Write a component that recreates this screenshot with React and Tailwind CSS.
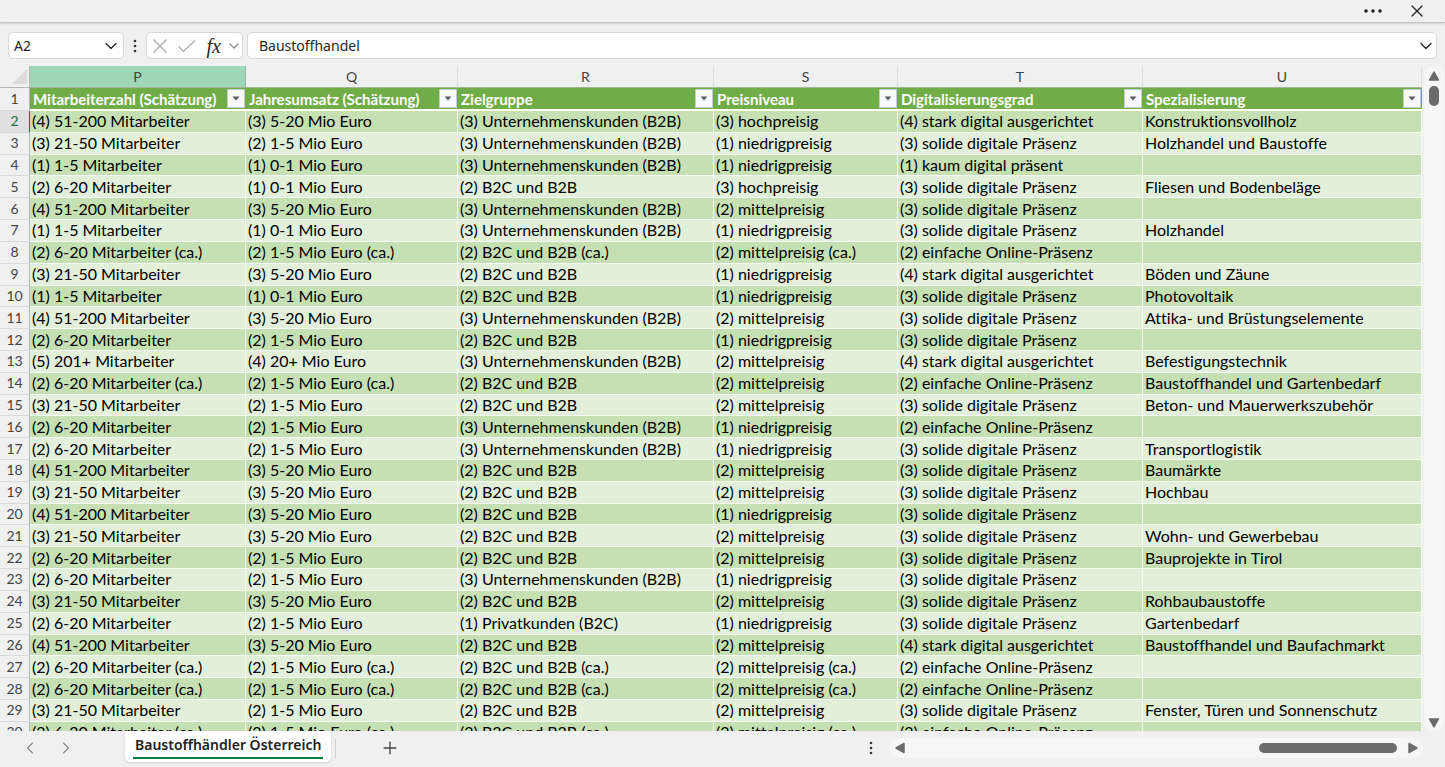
import React, { useState } from 'react';
import { ChevronDown, ChevronLeft, ChevronRight, Plus, X } from 'lucide-react';

const columns = [
  { letter: 'P', title: 'Mitarbeiterzahl (Schätzung)', width: 'w-[216px]' },
  { letter: 'Q', title: 'Jahresumsatz (Schätzung)', width: 'w-[212px]' },
  { letter: 'R', title: 'Zielgruppe', width: 'w-[256px]' },
  { letter: 'S', title: 'Preisniveau', width: 'w-[184px]' },
  { letter: 'T', title: 'Digitalisierungsgrad', width: 'w-[245px]' },
  { letter: 'U', title: 'Spezialisierung', width: '' },
];

const M1 = '(1) 1-5 Mitarbeiter';
const M2 = '(2) 6-20 Mitarbeiter';
const M3 = '(3) 21-50 Mitarbeiter';
const M4 = '(4) 51-200 Mitarbeiter';
const M5 = '(5) 201+ Mitarbeiter';

const E1 = '(1) 0-1 Mio Euro';
const E2 = '(2) 1-5 Mio Euro';
const E3 = '(3) 5-20 Mio Euro';
const E4 = '(4) 20+ Mio Euro';

const B2C = '(1) Privatkunden (B2C)';
const BOTH = '(2) B2C und B2B';
const B2B = '(3) Unternehmenskunden (B2B)';

const LOW = '(1) niedrigpreisig';
const MID = '(2) mittelpreisig';
const HIGH = '(3) hochpreisig';

const D1 = '(1) kaum digital präsent';
const D2 = '(2) einfache Online-Präsenz';
const D3 = '(3) solide digitale Präsenz';
const D4 = '(4) stark digital ausgerichtet';

const ca = (text) => `${text} (ca.)`;

const rows = [
  [M4, E3, B2B, HIGH, D4, 'Konstruktionsvollholz'],
  [M3, E2, B2B, LOW, D3, 'Holzhandel und Baustoffe'],
  [M1, E1, B2B, LOW, D1, ''],
  [M2, E1, BOTH, HIGH, D3, 'Fliesen und Bodenbeläge'],
  [M4, E3, B2B, MID, D3, ''],
  [M1, E1, B2B, LOW, D3, 'Holzhandel'],
  [ca(M2), ca(E2), ca(BOTH), ca(MID), D2, ''],
  [M3, E3, BOTH, LOW, D4, 'Böden und Zäune'],
  [M1, E1, BOTH, LOW, D3, 'Photovoltaik'],
  [M4, E3, B2B, MID, D3, 'Attika- und Brüstungselemente'],
  [M2, E2, BOTH, LOW, D3, ''],
  [M5, E4, B2B, MID, D4, 'Befestigungstechnik'],
  [ca(M2), ca(E2), BOTH, MID, D2, 'Baustoffhandel und Gartenbedarf'],
  [M3, E2, BOTH, MID, D3, 'Beton- und Mauerwerkszubehör'],
  [M2, E2, B2B, LOW, D2, ''],
  [M2, E2, B2B, LOW, D3, 'Transportlogistik'],
  [M4, E3, BOTH, MID, D3, 'Baumärkte'],
  [M3, E3, BOTH, MID, D3, 'Hochbau'],
  [M4, E3, BOTH, LOW, D3, ''],
  [M3, E3, BOTH, MID, D3, 'Wohn- und Gewerbebau'],
  [M2, E2, BOTH, MID, D3, 'Bauprojekte in Tirol'],
  [M2, E2, B2B, LOW, D3, ''],
  [M3, E3, BOTH, MID, D3, 'Rohbaubaustoffe'],
  [M2, E2, B2C, LOW, D3, 'Gartenbedarf'],
  [M4, E3, BOTH, MID, D4, 'Baustoffhandel und Baufachmarkt'],
  [ca(M2), ca(E2), ca(BOTH), ca(MID), D2, ''],
  [ca(M2), ca(E2), ca(BOTH), ca(MID), D2, ''],
  [M3, E2, BOTH, MID, D3, 'Fenster, Türen und Sonnenschutz'],
  [ca(M2), ca(E2), ca(BOTH), ca(MID), D2, ''],
];

const Arrow = ({ points, className }) => (
  <svg viewBox="0 0 12 12" className={className} aria-hidden="true">
    <polygon points={points} fill="#6b6b6b" stroke="#6b6b6b" strokeWidth="1.5" strokeLinejoin="round" />
  </svg>
);

const Dots = ({ className }) => (
  <svg viewBox="0 0 4 14" className={className} fill="#333333" aria-hidden="true">
    <circle cx="2" cy="2" r="1.3" />
    <circle cx="2" cy="7" r="1.3" />
    <circle cx="2" cy="12" r="1.3" />
  </svg>
);

const TitleBar = () => (
  <header className="relative z-10 flex h-[23px] shrink-0 items-center justify-end gap-6 border-b border-[#c6c6c6] bg-[#f0f0f0] pr-[18px] shadow-sm">
    <button aria-label="Weitere Optionen" className="flex h-5 items-center">
      <svg viewBox="0 0 20 4" className="h-1 w-5" fill="#222222">
        <circle cx="3" cy="2" r="1.8" />
        <circle cx="10" cy="2" r="1.8" />
        <circle cx="17" cy="2" r="1.8" />
      </svg>
    </button>
    <button aria-label="Schließen" className="flex h-5 items-center">
      <X className="h-5 w-5 text-[#222222]" strokeWidth={1.5} />
    </button>
  </header>
);

const FormulaBar = () => {
  const [cell, setCell] = useState('A2');
  const [formula, setFormula] = useState('Baustoffhandel');

  return (
    <div className="flex shrink-0 items-center px-2 pt-[9px] pb-[7px] font-['Noto_Sans',sans-serif] text-sm text-[#262626]">
      <div className="flex h-[27px] w-[116px] items-center rounded-[5px] border border-[#d8d8d8] bg-white pr-0.5 pl-[5px]">
        <input
          aria-label="Namenfeld"
          className="min-w-0 flex-1 bg-transparent outline-none"
          value={cell}
          onChange={(e) => setCell(e.target.value)}
        />
        <button aria-label="Namenfeld öffnen">
          <ChevronDown className="h-5 w-5" strokeWidth={1.6} />
        </button>
      </div>
      <Dots className="mx-2 h-3.5 w-1.5" />
      <div className="flex h-[27px] w-[97px] items-center justify-between rounded-[5px] border border-[#d8d8d8] bg-white pl-[5px]">
        <button aria-label="Abbrechen">
          <svg viewBox="0 0 16 16" className="h-4 w-4" fill="none" stroke="#a8a8a8" strokeWidth="1.2">
            <path d="M1.5 1.5 14.5 14.5M14.5 1.5 1.5 14.5" />
          </svg>
        </button>
        <button aria-label="Eingeben" className="ml-1">
          <svg viewBox="0 0 20 14" className="h-3.5 w-5" fill="none" stroke="#a8a8a8" strokeWidth="1.2">
            <path d="M1.5 7.5 6.5 12.5 18 1.5" />
          </svg>
        </button>
        <button aria-label="Funktion einfügen" className="ml-1 font-['Liberation_Serif',serif] text-xl leading-5 italic">
          fx
        </button>
        <button aria-label="Funktionsliste">
          <ChevronDown className="h-4 w-4 text-[#8a8a8a]" strokeWidth={1.8} />
        </button>
      </div>
      <div className="ml-1 flex h-[27px] flex-1 items-center rounded-[5px] border border-[#d8d8d8] bg-white pl-[11px]">
        <input
          aria-label="Bearbeitungsleiste"
          className="min-w-0 flex-1 bg-transparent outline-none"
          value={formula}
          onChange={(e) => setFormula(e.target.value)}
        />
        <button aria-label="Bearbeitungsleiste erweitern">
          <ChevronDown className="h-5 w-5" strokeWidth={1.6} />
        </button>
      </div>
    </div>
  );
};

const Sheet = () => (
  <table className="h-[678px] w-full table-fixed border-separate border-spacing-0 text-base leading-5 whitespace-nowrap text-black [font-variant-ligatures:none]">
    <colgroup>
      <col className="w-[30px]" />
      {columns.map((col) => (
        <col key={col.letter} className={col.width} />
      ))}
    </colgroup>
    <thead>
      <tr className="h-[22px] text-sm">
        <td className="border-r border-b border-[#b5b5b5] p-0">
          <svg viewBox="0 0 16 16" className="ml-auto h-4 w-[18px]" aria-hidden="true">
            <polygon points="15,0 15,15 0,15" fill="#dcdcdc" />
          </svg>
        </td>
        {columns.map((col) => (
          <th
            key={col.letter}
            scope="col"
            className={`border-r border-b border-b-[#a3b59a] p-0 font-normal text-[#444444] ${
              col.letter === 'P' ? 'border-r-[#9ab8a8] bg-[#9fd6b8]' : 'border-r-[#dedede]'
            }`}
          >
            {col.letter}
          </th>
        ))}
      </tr>
      <tr className="h-[23px] bg-[#70ad47] text-[15px] text-white">
        <th scope="row" className="border-r border-b border-r-[#b5b5b5] border-b-[#dadada] bg-[#f0f0f0] p-0 text-sm font-normal text-[#444444]">
          1
        </th>
        {columns.map((col) => (
          <th key={col.letter} scope="col" className="border-b-2 border-white p-0 pl-[3px] text-left">
            <div className="flex items-center justify-between">
              <span>{col.title}</span>
              <button
                aria-label={`${col.title} filtern`}
                className="mr-px flex h-[19px] w-[18px] items-center justify-center border border-[#c5cbd6] bg-[#f8f9fc]"
              >
                <svg viewBox="0 0 8 5" className="h-[5px] w-2" aria-hidden="true">
                  <polygon points="0.5,0.5 7.5,0.5 4,4.5" fill="#5c5c5c" />
                </svg>
              </button>
            </div>
          </th>
        ))}
      </tr>
    </thead>
    <tbody>
      {rows.map((row, i) => (
        <tr key={i} className="odd:bg-[#c6e0b4] even:bg-[#e2efda]">
          <th
            scope="row"
            className={`border-r border-b border-b-[#dadada] p-0 text-sm font-normal ${
              i === 0 ? 'border-r-[#217346] bg-[#e0e0e0] text-[#1e7145]' : 'border-r-[#b5b5b5] bg-[#f0f0f0] text-[#444444]'
            }`}
          >
            {i + 2}
          </th>
          {row.map((text, j) => (
            <td key={j} className="border-r border-b border-[#f5faf2] p-0 pl-0.5">
              {text}
            </td>
          ))}
        </tr>
      ))}
    </tbody>
  </table>
);

const VerticalScroll = () => (
  <div className="mr-px ml-0.5 flex w-5 shrink-0 flex-col items-center rounded-full bg-[#f6f6f6] pt-1 pb-0.5">
    <button aria-label="Nach oben" className="flex">
      <Arrow points="6,2 10.5,10 1.5,10" className="h-3 w-3" />
    </button>
    <div className="mt-1 h-5 w-2.5 rounded-full bg-[#6b6b6b]" />
    <button aria-label="Nach unten" className="mt-auto flex">
      <Arrow points="6,10 10.5,2 1.5,2" className="h-3 w-3" />
    </button>
  </div>
);

const BottomBar = () => (
  <footer className="flex h-9 shrink-0 items-start">
    <div className="flex h-[34px] w-[125px] items-center gap-4 pl-5 text-[#8c8c8c]">
      <button aria-label="Vorheriges Blatt">
        <ChevronLeft className="h-5 w-5" strokeWidth={1.5} />
      </button>
      <button aria-label="Nächstes Blatt">
        <ChevronRight className="h-5 w-5" strokeWidth={1.5} />
      </button>
    </div>
    <button className="h-[31px] rounded-b-[5px] bg-white px-2 shadow-sm">
      <span className="block border-b-2 border-[#107c41] px-0.5 pb-0.5 font-['Noto_Sans',sans-serif] text-sm leading-5 font-semibold text-[#222222]">
        Baustoffhändler Österreich
      </span>
    </button>
    <div className="mt-2 ml-1 h-5 w-px bg-[#d0d0d0]" />
    <button aria-label="Neues Blatt" className="mt-[7px] ml-11">
      <Plus className="h-5 w-5 text-[#444444]" strokeWidth={1.6} />
    </button>
    <div className="mt-[7px] mr-[22px] ml-auto flex w-[555px] items-center gap-4">
      <Dots className="h-3.5 w-1.5" />
      <div className="flex h-5 flex-1 items-center rounded-full bg-[#f6f6f6] px-1">
        <button aria-label="Nach links">
          <Arrow points="2,6 10,1.5 10,10.5" className="h-3 w-3" />
        </button>
        <div className="mr-2.5 ml-auto h-2.5 w-[138px] rounded-full bg-[#6b6b6b]" />
        <button aria-label="Nach rechts">
          <Arrow points="10,6 2,1.5 2,10.5" className="h-3 w-3" />
        </button>
      </div>
    </div>
  </footer>
);

function App() {
  return (
    <div className="flex h-screen flex-col overflow-hidden bg-[#f0f0f0] font-['Lato',sans-serif]">
      <TitleBar />
      <FormulaBar />
      <main className="flex min-h-0 flex-1">
        <div className="min-w-0 flex-1 overflow-hidden">
          <Sheet />
        </div>
        <VerticalScroll />
      </main>
      <BottomBar />
    </div>
  );
}

export default App;
